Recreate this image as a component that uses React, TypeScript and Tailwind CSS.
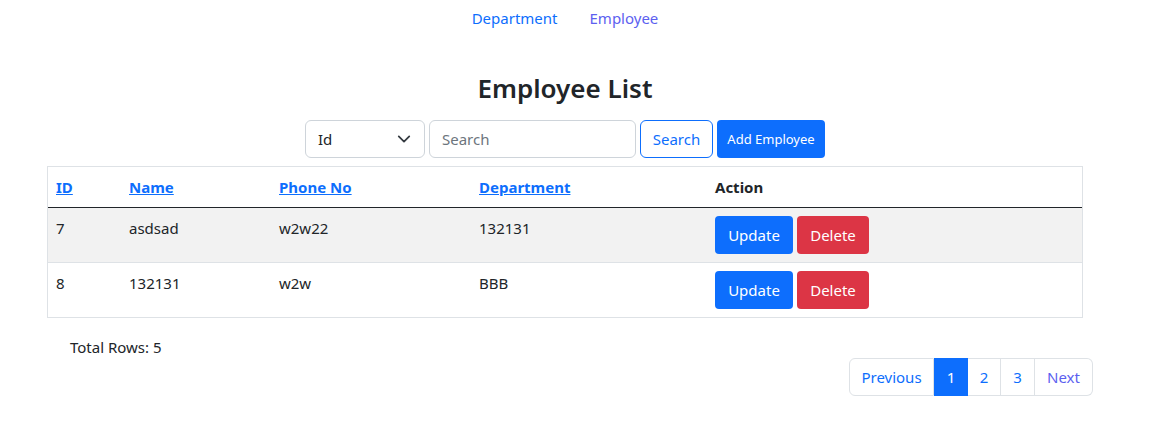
import React from "react";

const rows = [
  { id: 7, name: "asdsad", phone: "w2w22", dept: "132131", bg: "bg-[#f2f2f2]" },
  { id: 8, name: "132131", phone: "w2w", dept: "BBB", bg: "bg-white" },
];

export default function App() {
  return (
    <div
      className="w-[1171px] h-[442px] bg-white text-[#212529] text-[15px] leading-[24px]"
      style={{ fontFamily: '"Noto Sans", "Open Sans", sans-serif' }}
    >
      <div className="w-[1130px]">
        <nav className="flex justify-center gap-[32px] pt-[6px] h-[24px] box-content">
          <a className="text-[#0d6efd] cursor-pointer">Department</a>
          <a className="text-[#5c5ff0] cursor-pointer">Employee</a>
        </nav>

        <h3 className="mt-[41px] text-center text-[26px] leading-[34px] font-semibold">Employee List</h3>

        <div className="mt-[15px] flex justify-center gap-[4px]">
          <div className="w-[120px] h-[38px] border border-[#ced4da] rounded-[6px] flex items-center justify-between pl-[12px] pr-[13px]">
            <span>Id</span>
            <svg width="14" height="14" viewBox="0 0 16 16" fill="none" stroke="#343a40" strokeWidth="2" strokeLinecap="round" strokeLinejoin="round">
              <path d="M2 5l6 6 6-6" />
            </svg>
          </div>
          <div className="w-[207px] h-[38px] border border-[#ced4da] rounded-[6px] flex items-center pl-[12px] text-[#6c757d]">
            Search
          </div>
          <button className="w-[73px] h-[38px] border border-[#0d6efd] text-[#0d6efd] rounded-[6px] flex items-center justify-center">
            Search
          </button>
          <button className="w-[108px] h-[38px] bg-[#0d6efd] text-white rounded-[4px] text-[13px] flex items-center justify-center">
            Add Employee
          </button>
        </div>

        <div className="mt-[8px] ml-[47px] w-[1036px] border border-[#dee2e6]">
          <div className="flex h-[41px] border-b border-[#212529] font-bold">
            <div className="w-[73px] px-[8px] py-[8px]"><a className="text-[#0d6efd] underline">ID</a></div>
            <div className="w-[150px] px-[8px] py-[8px]"><a className="text-[#0d6efd] underline">Name</a></div>
            <div className="w-[200px] px-[8px] py-[8px]"><a className="text-[#0d6efd] underline">Phone No</a></div>
            <div className="w-[236px] px-[8px] py-[8px]"><a className="text-[#0d6efd] underline">Department</a></div>
            <div className="flex-1 px-[8px] py-[8px]">Action</div>
          </div>
          {rows.map((r, i) => (
            <div
              key={r.id}
              className={`flex ${r.bg} ${i === 0 ? "border-b border-[#dee2e6]" : ""}`}
              style={{ height: i === 0 ? 55 : 54 }}
            >
              <div className="w-[73px] px-[8px] py-[8px]">{r.id}</div>
              <div className="w-[150px] px-[8px] py-[8px]">{r.name}</div>
              <div className="w-[200px] px-[8px] py-[8px]">{r.phone}</div>
              <div className="w-[236px] px-[8px] py-[8px]">{r.dept}</div>
              <div className="flex-1 px-[8px] py-[8px] flex gap-[4px]">
                <button className="w-[78px] h-[38px] bg-[#0d6efd] text-white rounded-[4px] flex items-center justify-center">
                  Update
                </button>
                <button className="w-[72px] h-[38px] bg-[#dc3545] text-white rounded-[4px] flex items-center justify-center">
                  Delete
                </button>
              </div>
            </div>
          ))}
        </div>

        <div className="mt-[17px] ml-[70px]">Total Rows: 5</div>

        <div className="mt-[-1px] ml-[849px] flex h-[38px] w-[244px]">
          <div className="w-[85px] border border-[#dee2e6] rounded-l-[6px] text-[#0d6efd] flex items-center justify-center">Previous</div>
          <div className="w-[34px] bg-[#0d6efd] text-white flex items-center justify-center">1</div>
          <div className="w-[33px] border border-l-0 border-[#dee2e6] text-[#0d6efd] flex items-center justify-center">2</div>
          <div className="w-[34px] border border-l-0 border-[#dee2e6] text-[#0d6efd] flex items-center justify-center">3</div>
          <div className="w-[58px] border border-l-0 border-[#dee2e6] rounded-r-[6px] text-[#5c5ff0] flex items-center justify-center">Next</div>
        </div>
      </div>
    </div>
  );
}
